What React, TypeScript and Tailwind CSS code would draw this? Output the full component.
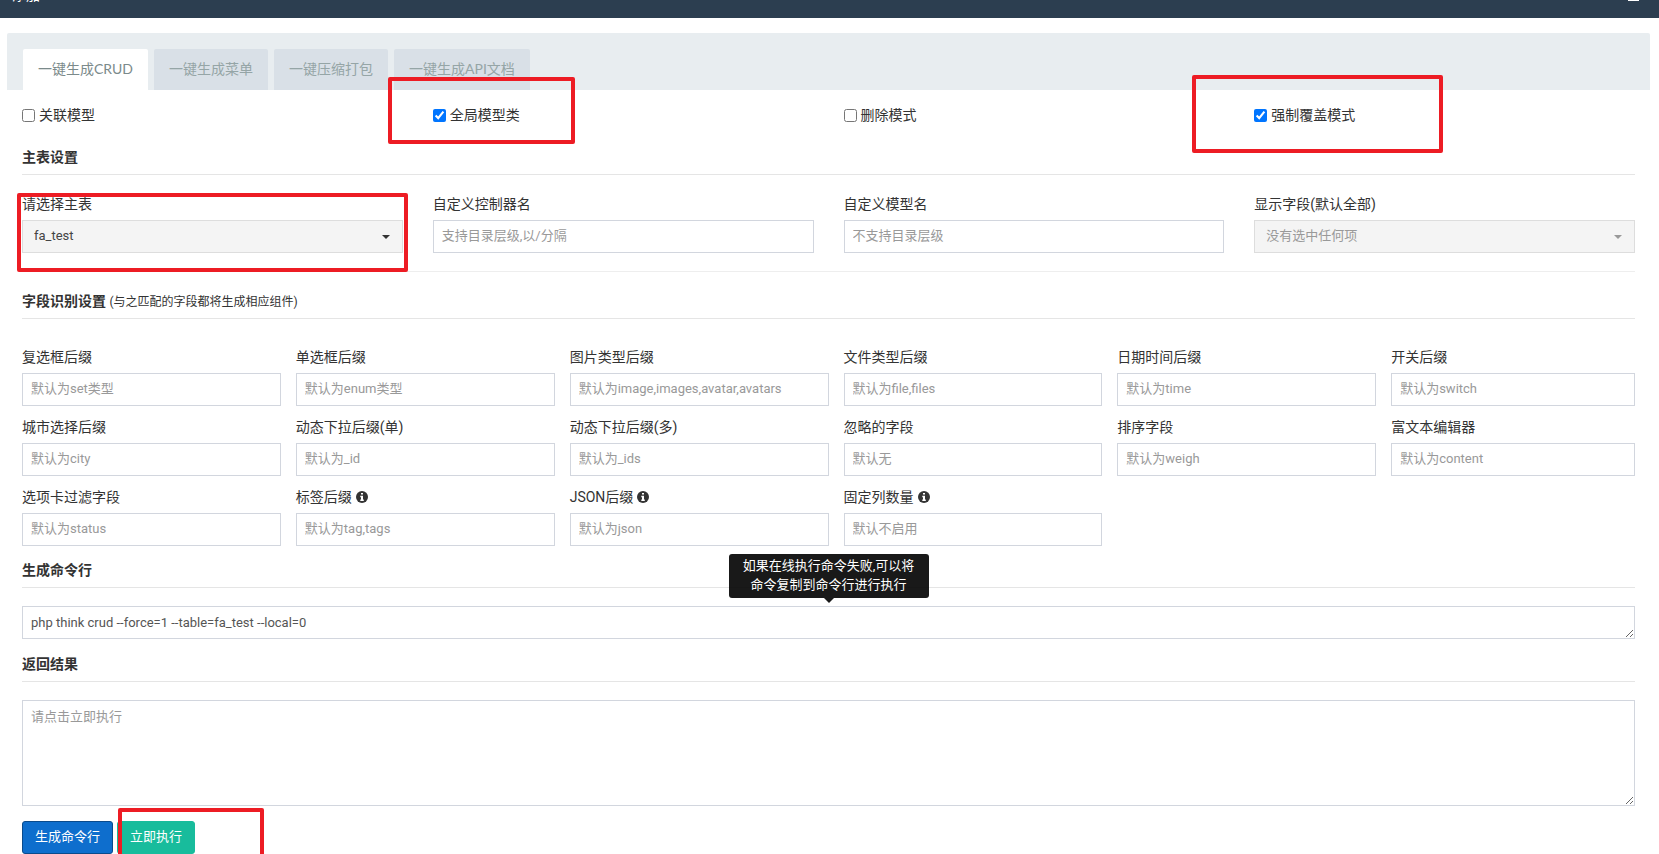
import { useState } from "react";
import type { ReactNode } from "react";

interface Field {
  name: string;
  label: string;
  placeholder: string;
  info?: boolean;
}

const tabs = ["一键生成CRUD", "一键生成菜单", "一键压缩打包", "一键生成API文档"];

const fields: Field[] = [
  { name: "setcheckboxsuffix", label: "复选框后缀", placeholder: "默认为set类型" },
  { name: "enumradiosuffix", label: "单选框后缀", placeholder: "默认为enum类型" },
  { name: "imagefield", label: "图片类型后缀", placeholder: "默认为image,images,avatar,avatars" },
  { name: "filefield", label: "文件类型后缀", placeholder: "默认为file,files" },
  { name: "intdatesuffix", label: "日期时间后缀", placeholder: "默认为time" },
  { name: "switchsuffix", label: "开关后缀", placeholder: "默认为switch" },
  { name: "citysuffix", label: "城市选择后缀", placeholder: "默认为city" },
  { name: "selectpagesuffix", label: "动态下拉后缀(单)", placeholder: "默认为_id" },
  { name: "selectpagessuffix", label: "动态下拉后缀(多)", placeholder: "默认为_ids" },
  { name: "ignorefields", label: "忽略的字段", placeholder: "默认无" },
  { name: "sortfield", label: "排序字段", placeholder: "默认为weigh" },
  { name: "editorsuffix", label: "富文本编辑器", placeholder: "默认为content" },
  { name: "headingfilterfield", label: "选项卡过滤字段", placeholder: "默认为status" },
  { name: "tagsuffix", label: "标签后缀", placeholder: "默认为tag,tags", info: true },
  { name: "jsonsuffix", label: "JSON后缀", placeholder: "默认为json", info: true },
  { name: "fixedcolumns", label: "固定列数量", placeholder: "默认不启用", info: true },
];

const labelClass = "block mb-[7px] leading-[18px]";

const inputClass =
  "block w-full h-[33px] px-2 pb-px border border-[#d2d6de] bg-white text-[13px] text-[#555] placeholder:text-[#999] outline-none";

function InfoIcon() {
  return (
    <svg className="inline-block w-3 h-3 ml-1 align-[-1px]" viewBox="0 0 12 12" fill="none">
      <circle cx="6" cy="6" r="6" fill="#333" />
      <path d="M5 2h2v1.6H5zM4.3 4.8H7v3.6h.8V10H4.3V8.4H5V6.3h-.7z" fill="#fff" />
    </svg>
  );
}

// Hand-drawn style marker around a control
function Mark({ className }: { className: string }) {
  return <span className={`absolute z-10 border-4 border-[#ed1c24] rounded-xs pointer-events-none ${className}`} />;
}

function Check({ label, checked, children }: { label: string; checked?: boolean; children?: ReactNode }) {
  return (
    <div className="relative px-[15px]">
      <label className="inline-flex items-center gap-1 h-5">
        <input type="checkbox" defaultChecked={checked} className="w-[13px] h-[13px]" />
        {label}
      </label>
      {children}
    </div>
  );
}

function Select({ id, value, muted }: { id: string; value: string; muted?: boolean }) {
  return (
    <div className="relative">
      <select
        id={id}
        className={`block w-full h-[33px] pl-[11px] pr-8 appearance-none border border-[#ddd] bg-[#f4f4f4] text-[13px] outline-none ${
          muted ? "text-[#999]" : "text-[#444]"
        }`}
      >
        <option>{value}</option>
      </select>
      <svg
        className={`absolute right-[13px] top-[15px] w-2 h-1 pointer-events-none ${muted ? "text-[#999]" : "text-[#333]"}`}
        viewBox="0 0 8 4"
        fill="currentColor"
      >
        <path d="M0 0h8L4 4z" />
      </svg>
    </div>
  );
}

function Heading({ children }: { children: ReactNode }) {
  return <h4 className="mx-[15px] h-[27px] leading-[18px] border-b border-[#e5e5e5]">{children}</h4>;
}

export default function App() {
  const [active, setActive] = useState(0);

  return (
    <div className="h-screen overflow-hidden bg-white text-sm leading-5 text-[#333] font-[Roboto,'Noto_Sans_CJK_SC',sans-serif]">
      <header className="relative h-[18px] bg-[#2c3e50] text-white overflow-hidden">
        <span className="absolute left-3 bottom-[13px]">添加</span>
        <span className="absolute right-5 top-0 w-[11px] h-px bg-white" />
      </header>

      <main className="ml-[7px] mr-[9px] mt-[15px]">
        <nav className="flex gap-[6px] h-[57px] pt-4 px-4 rounded-t-xs bg-[#e8edf0] font-[Lato,'Noto_Sans_CJK_SC',sans-serif]">
          {tabs.map((tab, idx) => (
            <button
              key={tab}
              type="button"
              onClick={() => setActive(idx)}
              className={`px-[15px] pb-[2px] rounded-t-xs ${
                active === idx ? "bg-white text-[#7b8a8b]" : "bg-[#d9e0e7] text-[#95a5a6]"
              }`}
            >
              {tab}
            </button>
          ))}
        </nav>

        <form onSubmit={(e) => e.preventDefault()}>
          <div className="grid grid-cols-4 mt-[15px]">
            <Check label="关联模型" />
            <Check label="全局模型类" checked>
              <Mark className="-left-[30px] -top-7 w-[187px] h-[67px]" />
            </Check>
            <Check label="删除模式" />
            <Check label="强制覆盖模式" checked>
              <Mark className="-left-[47px] -top-[30px] w-[251px] h-[78px]" />
            </Check>
          </div>

          <div className="mt-[21px]">
            <Heading>
              <b>主表设置</b>
            </Heading>
          </div>

          <div className="grid grid-cols-4 mt-5">
            <div className="relative px-[15px]">
              <label htmlFor="table" className={labelClass}>请选择主表</label>
              <Select id="table" value="fa_test" />
              <Mark className="left-[10px] -top-[2px] right-[10px] h-[79px]" />
            </div>
            <div className="px-[15px]">
              <label htmlFor="controller" className={labelClass}>自定义控制器名</label>
              <input id="controller" type="text" className={inputClass} placeholder="支持目录层级,以/分隔" />
            </div>
            <div className="px-[15px]">
              <label htmlFor="model" className={labelClass}>自定义模型名</label>
              <input id="model" type="text" className={inputClass} placeholder="不支持目录层级" />
            </div>
            <div className="px-[15px]">
              <label htmlFor="fields" className={labelClass}>显示字段(默认全部)</label>
              <Select id="fields" value="没有选中任何项" muted />
            </div>
          </div>

          <hr className="mx-[15px] mt-[18px] mb-5 border-[#eee]" />

          <Heading>
            <b>字段识别设置</b> <small className="text-xs">(与之匹配的字段都将生成相应组件)</small>
          </Heading>

          <div className="grid grid-cols-6 gap-y-3 mt-[29px]">
            {fields.map((field) => (
              <div key={field.name} className="pl-[15px] nth-[6n]:pr-[15px]">
                <label htmlFor={field.name} className={labelClass}>
                  {field.label}
                  {field.info && <InfoIcon />}
                </label>
                <input id={field.name} type="text" className={inputClass} placeholder={field.placeholder} />
              </div>
            ))}
          </div>

          <div className="mt-[15px]">
            <Heading>
              <b>
                <label htmlFor="command">生成命令行</label>
              </b>
            </Heading>
          </div>
          <div className="relative mx-[15px] mt-[18px]">
            <textarea
              id="command"
              rows={1}
              className="block w-full h-[33px] px-2 py-[6px] resize border border-[#d2d6de] text-[13px] leading-[19px] text-[#555] outline-none overflow-hidden"
              defaultValue="php think crud --force=1 --table=fa_test --local=0"
            />
            <div
              role="tooltip"
              className="absolute bottom-full left-1/2 -translate-x-1/2 mb-2 w-[200px] px-2 pt-[2px] pb-1 rounded-[3px] bg-black/90 text-white text-[13px] leading-[19px] text-center"
            >
              如果在线执行命令失败,可以将命令复制到命令行进行执行
              <span className="absolute top-full left-1/2 -ml-[5px] border-x-5 border-t-5 border-x-transparent border-t-black/90" />
            </div>
          </div>

          <div className="mt-4">
            <Heading>
              <b>
                <label htmlFor="result">返回结果</label>
              </b>
            </Heading>
          </div>
          <div className="mx-[15px] mt-[18px]">
            <textarea
              id="result"
              rows={5}
              className="block w-full h-[106px] px-2 py-[6px] resize border border-[#d2d6de] text-[13px] leading-[19px] text-[#555] placeholder:text-[#999] outline-none"
              placeholder="请点击立即执行"
            />
          </div>

          <div className="flex gap-1 mx-[15px] mt-[15px] text-[13px] text-white">
            <button type="button" className="h-[33px] px-3 border border-[#0a4b8c] rounded-[3px] bg-[#0e6ecd]">
              生成命令行
            </button>
            <div className="relative">
              <button type="submit" className="h-[33px] px-3 border border-[#18bc9c] rounded-[3px] bg-[#18bc9c]">
                立即执行
              </button>
              <Mark className="left-px -top-[13px] w-[146px] h-16" />
            </div>
          </div>
        </form>
      </main>
    </div>
  );
}
